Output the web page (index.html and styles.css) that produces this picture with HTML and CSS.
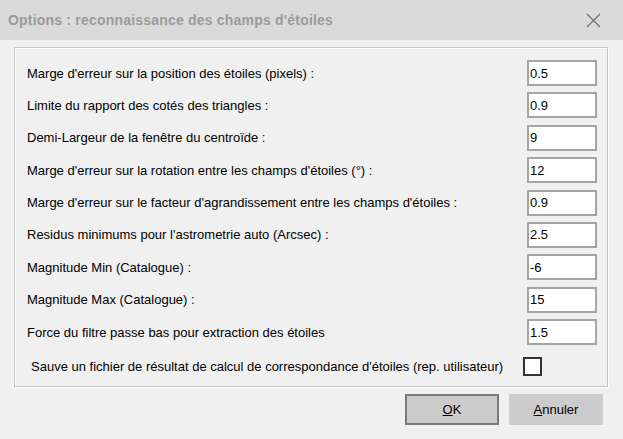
FILE: index.html
```html
<!DOCTYPE html>
<html lang="fr">
<head>
  <meta charset="UTF-8">
  <title>Options : reconnaissance des champs d'étoiles</title>
  <link rel="stylesheet" href="styles.css">
</head>
<body>
  <div class="window">
    <div class="titlebar">
      <span class="title">Options : reconnaissance des champs d'étoiles</span>
      <svg class="close" width="15" height="15" viewBox="0 0 15 15">
        <path d="M1 1 L14 14 M14 1 L1 14" stroke="#707070" stroke-width="1.2" fill="none"/>
      </svg>
    </div>
    <div class="groupbox">
      <div class="rows">
        <div class="row"><label>Marge d'erreur sur la position des étoiles (pixels) :</label><input class="field" type="text" value="0.5"></div>
        <div class="row"><label>Limite du rapport des cotés des triangles :</label><input class="field" type="text" value="0.9"></div>
        <div class="row"><label>Demi-Largeur de la fenêtre du centroïde :</label><input class="field" type="text" value="9"></div>
        <div class="row"><label>Marge d'erreur sur la rotation entre les champs d'étoiles (°) :</label><input class="field" type="text" value="12"></div>
        <div class="row"><label>Marge d'erreur sur le facteur d'agrandissement entre les champs d'étoiles :</label><input class="field" type="text" value="0.9"></div>
        <div class="row"><label>Residus minimums pour l'astrometrie auto (Arcsec) :</label><input class="field" type="text" value="2.5"></div>
        <div class="row"><label>Magnitude Min (Catalogue) :</label><input class="field" type="text" value="-6"></div>
        <div class="row"><label>Magnitude Max (Catalogue) :</label><input class="field" type="text" value="15"></div>
        <div class="row"><label>Force du filtre passe bas pour extraction des étoiles</label><input class="field" type="text" value="1.5"></div>
      </div>
      <div class="checkrow">
        <span>Sauve un fichier de résultat de calcul de correspondance d'étoiles (rep. utilisateur)</span>
        <span class="checkbox"></span>
      </div>
    </div>
    <div class="buttons">
      <button class="btn btn-default"><u>O</u>K</button>
      <button class="btn"><u>A</u>nnuler</button>
    </div>
  </div>
</body>
</html>
```
FILE: styles.css
```css
body { margin: 0; background: #f0f0f0; font-family: "Liberation Sans", Arial, sans-serif; font-size: 13px; color: #000; }
.window { width: 623px; height: 439px; background: #f0f0f0; box-sizing: border-box; overflow: hidden; }
.titlebar { height: 40px; background: #dadada; display: flex; align-items: center; justify-content: space-between; padding: 0 22px 0 8px; box-sizing: border-box; }
.title { font-weight: bold; font-size: 14px; letter-spacing: 0.2px; color: #9a9a9a; }
.close { display: block; }
.groupbox { margin: 7px 0 0 14px; width: 594px; height: 340px; box-sizing: border-box; border: 1px solid #c4c4c4; box-shadow: inset 1px 1px 0 #fff, 1px 1px 0 #fff; }
.rows { display: flex; flex-direction: column; gap: 6.4px; padding: 12px 10px 0 12px; }
.row { display: flex; align-items: center; justify-content: space-between; height: 26px; }
.field { width: 70px; height: 26px; box-sizing: border-box; border: 2px solid #a4a4a4; background: #fff; padding: 0 1px; margin: 0; font: 13px "Liberation Sans", Arial, sans-serif; color: #000; outline: none; }
.checkrow { display: flex; align-items: center; gap: 20px; padding-left: 16px; margin-top: 12px; height: 19px; }
.checkbox { width: 19px; height: 19px; box-sizing: border-box; border: 2px solid #333; background: #fff; }
.buttons { display: flex; justify-content: flex-end; gap: 10px; padding-right: 20px; margin-top: 7px; }
.btn { width: 94px; height: 31px; box-sizing: border-box; border: 2px solid #cccccc; background: #cccccc; font: 13px "Liberation Sans", Arial, sans-serif; color: #000; padding: 0; }
.btn-default { border-color: #7a7a7a; }
```
